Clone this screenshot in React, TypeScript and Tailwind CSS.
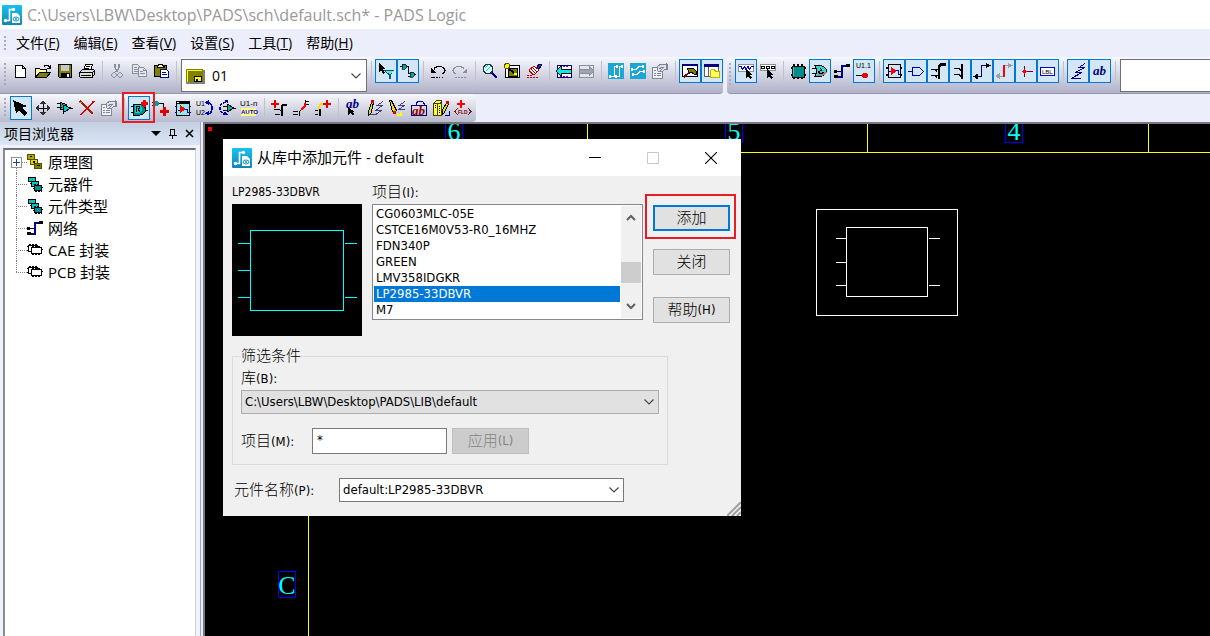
import React, { useState } from 'react';

type IconProps = { name: string; className?: string };

// 16x16 pixel drawings, one entry for each tool
const icons: Record<string, React.ReactNode> = {
  new: <path d="M2.500 2.500h7l3 3v9h-10zM9.500 2.500v3h3" fill="#fff" stroke="#000" />,
  open: (
    <>
      <path d="M.500 14.500v-9h4l1 1h6v3" fill="#ffffb0" stroke="#000" />
      <path d="M.500 14.500l4-5h11l-4 5z" fill="#808000" stroke="#000" />
      <path d="M9 3.500l1-1h3l2 2M15.500 2v4M12 5.500h3" stroke="#000" fill="none" />
    </>
  ),
  save: (
    <>
      <path d="M1.500 1.500h13v13h-12l-1-1z" fill="#808000" stroke="#000" />
      <path d="M4 2h8v6H4z" fill="#c8c8c8" />
      <path d="M4 10h9v5H4z" fill="#000" />
      <path d="M10 11h2v3h-2z" fill="#fff" />
    </>
  ),
  print: (
    <>
      <path d="M4.500 7.500l2-6h7l-2 6z" fill="#fff" stroke="#000" />
      <path d="M7 3.500h4M6 5.500h4" stroke="#000" />
      <path d="M.500 9.500l3-3h11l1 1v4l-3 3h-11l-1-1z" fill="#ddd" stroke="#000" />
      <path d="M1 9.500h12v5M2 12.500h10M13 10l2-2" stroke="#000" fill="none" />
      <path d="M9 11h2v1H9z" fill="#e0e000" />
    </>
  ),
  cut: (
    <g stroke="#8a8f9c" fill="none">
      <path d="M6 1v4l3 4M10 1v4L7 9" strokeWidth="1.400" />
      <circle cx="5" cy="12" r="2.200" />
      <circle cx="11" cy="12" r="2.200" />
    </g>
  ),
  copy: (
    <g stroke="#8a8f9c" fill="#e4e6ee">
      <path d="M1.500 1.500h5l2 2v7h-7zM3 4.500h3M3 6.500h4M3 8.500h4" />
      <path d="M7.500 4.500h5l3 3v6h-8zM9 8.500h3M9 10.500h5M12 5.500v2h3" />
    </g>
  ),
  paste: (
    <>
      <path d="M1.500 2.500h12v11h-12z" fill="#808000" stroke="#000" />
      <path d="M4 3.500l2-2h3l2 2v1H4z" fill="#ffff60" stroke="#000" />
      <path d="M7.500 6.500h6l2 2v6h-8z" fill="#fff" stroke="#000080" />
      <path d="M9 9.500h4M9 11.500h5" stroke="#000080" />
    </>
  ),
  board: (
    <>
      <path d="M0 1h17v13H0z" fill="#808000" />
      <path d="M1.500 14V2.500H16" stroke="#ffff00" fill="none" />
      <path d="M0 14.500h18V2" stroke="#808080" strokeWidth="2" fill="none" />
      <path d="M8 8h7v5H8z" fill="#ff0" stroke="#000" />
      <path d="M10 11h2v2h-2z" fill="#000" />
    </>
  ),
  filter: (
    <>
      <path d="M1 0v9l2-2 2 4 2-1-2-4h3z" fill="#000" />
      <path d="M6.500 7.500h9l-3.500 4v4h-1v-4z" fill="#fff" stroke="#006060" />
      <path d="M7 8h8l-3 3" fill="#7dd" />
    </>
  ),
  link: (
    <>
      <path d="M2 1h3l2 2-2 3H2z" fill="#00a0a0" stroke="#000" strokeWidth=".7" />
      <path d="M0 3.500h2M7 3.500h1.500v7H10" stroke="#000" fill="none" />
      <path d="M10 9h3l2 2-2 3h-3z" fill="#00a0a0" stroke="#000" strokeWidth=".7" />
      <path d="M8 13.500h2M15 11.500h1" stroke="#000" />
    </>
  ),
  undo: (
    <>
      <path d="M4 6c2-4 10-3 11 1 0 2-1 3-3 4" stroke="#000" strokeWidth="1.200" fill="none" />
      <path d="M1 5v5h5z" fill="#000" />
      <path d="M2 9l3-3M1 14.500h9M12 14.500h1" stroke="#000" strokeDasharray="4 1 2 1" />
    </>
  ),
  redo: (
    <g stroke="#8a8f9c">
      <path d="M12 6C10 2 2 3 1 7c0 2 1 3 3 4" strokeWidth="1.200" fill="none" />
      <path d="M15 5v5h-5z" fill="#8a8f9c" stroke="none" />
      <path d="M3 14.500h2M6 14.500h9" strokeDasharray="2 1" />
    </g>
  ),
  zoom: (
    <>
      <path d="M10 10l5 5" stroke="#000080" strokeWidth="2.500" />
      <circle cx="6" cy="6" r="4.800" fill="#d8ffff" stroke="#303030" />
      <path d="M3 5l3-3M4 8l5-5" stroke="#00e0e0" />
    </>
  ),
  zoomBoard: (
    <>
      <path d="M1.500 2.500h14v12h-14z" fill="#fff" stroke="#000" strokeWidth="1.500" />
      <path d="M4 5h9v8H4z" fill="#808000" stroke="#000" />
      <path d="M4 5l6 5" stroke="#000" strokeWidth="2" />
      <circle cx="3" cy="3" r="2.500" fill="#ff0" stroke="#505000" />
      <path d="M10 10h3v2h-3z" fill="#ff0" />
    </>
  ),
  brush: (
    <>
      <path d="M11 4l2-3h2v2l-2 3z" fill="#3030c0" stroke="#000050" />
      <path d="M8 3l5 4-5 5-5-5z" fill="#fff" stroke="#b00000" />
      <path d="M7 5l4 4M5 6l4 4M3 8l4 4" stroke="#c00000" />
      <path d="M1 12.500h5M1 14.500h12" stroke="#d00000" strokeDasharray="2 1" />
    </>
  ),
  prev: (
    <>
      <path d="M1.500 2.500h14v12h-14z" fill="#fff" stroke="#000080" />
      <path d="M4 3.500h9M4 13.500h9" stroke="#80a" strokeDasharray="2 1" />
      <path d="M0 8l5-5v3h10v4H5v3z" fill="#00f0f0" stroke="#000" />
    </>
  ),
  next: (
    <g stroke="#8a8f9c">
      <path d="M1.500 2.500h14v12h-14z" fill="#e4e6ee" />
      <path d="M16 8l-5-5v3H1v4h10v3z" fill="#a0a4b0" />
    </g>
  ),
  layout: (
    <>
      <path d="M0 0h16v16H0z" fill="#1ca6d4" />
      <path d="M2 13.500h4.500v-10H9M8 13.500h3.500v-10H15" stroke="#fff" fill="none" />
      <path d="M1 12h2v3H1zM8 2h2v3H8zM7 12h2v3H7zM13 2h2v3h-2z" fill="#fff" />
    </>
  ),
  router: (
    <>
      <path d="M0 0h16v16H0z" fill="#1ca6d4" />
      <path d="M2 6.500h4l3-3h4M3 11.500h4l3-3h4" stroke="#fff" fill="none" />
      <path d="M1 5h2v3H1zM12 2h2v3h-2zM2 10h2v3H2zM13 7h2v3h-2z" fill="#fff" />
    </>
  ),
  properties: (
    <g stroke="#808593" fill="none">
      <path d="M.500 4.500h10v11H.500z" fill="#f0f1f6" />
      <path d="M2 7.500h2M2 10.500h2M5 10.500h4M2 12.500h2M5 12.500h4" />
      <path d="M5 4l4-3h6v5h-2l-3 3-4-1z" fill="#e0e2ea" />
      <path d="M7 6l3-2h2M8 8l3-3M14 0v7" />
    </g>
  ),
  hammer: (
    <>
      <path d="M.500 1.500h15v12H.500z" fill="#fff" stroke="#000" />
      <path d="M0 1h16v2H0z" fill="#000080" />
      <path d="M9 8l-7 6" stroke="#800000" strokeWidth="2" />
      <path d="M5 5h6l3 3v3h-2L9 9H7z" fill="#808000" stroke="#000" />
    </>
  ),
  explorer: (
    <>
      <path d="M.500 1.500h14v12H.500z" fill="#fff" stroke="#606060" />
      <path d="M0 1h15v3H0z" fill="#000080" />
      <path d="M4.500 4v10" stroke="#606060" />
      <path d="M6.500 14.500v-7l1-1h3l1 2h4v6z" fill="#ffff60" stroke="#c0b000" />
    </>
  ),
  waveSelect: (
    <>
      <path d="M.500 1.500h15v7H.500z" fill="#fff" stroke="#909090" />
      <path d="M1 3.500h2l1.500 3 2-3 1.500 3 2-3 1.500 3 2-3h2" stroke="#0000e0" fill="none" />
      <path d="M8 6v9l2-2 2 3 2-1-2-3h3z" fill="#000" />
    </>
  ),
  boxSelect: (
    <>
      <path d="M.500 1.500h15v6H.500z" fill="#fff" stroke="#909090" />
      <path d="M1.500 3.500h3v2h-3zM6.500 3.500h3v2h-3zM11.500 3.500h3v2h-3z" fill="none" stroke="#000" />
      <path d="M7 6v9l2-2 2 3 2-1-2-3h3z" fill="#000" />
    </>
  ),
  chip: (
    <>
      <path d="M2 3h12v11H2z" fill="#008a8a" stroke="#000" />
      <path d="M3.500 1v2M7.500 1v2M11.500 1v2M3.500 14v2M7.500 14v2M11.500 14v2M1 5h1M1 12h1M14 5h2M14 12h2" stroke="#000" strokeWidth="2" />
      <path d="M3 4h1v9H3z" fill="#00e0e0" />
    </>
  ),
  gate: (
    <>
      <path d="M3 2.500h6q5 2 6 5.500-2 4-6 5.500H3q3-5 0-11z" fill="#40d0d0" stroke="#000" />
      <path d="M4 13q3-2 2-4h9q-3 4-6 4z" fill="#909090" />
      <path d="M0 5.500h4M0 10.500h4M8 5q3 2 0 3t1 3l3-2" stroke="#000" fill="none" />
    </>
  ),
  net: (
    <>
      <path d="M2 13.500h5.500v-11H14" stroke="#000090" strokeWidth="2" fill="none" />
      <path d="M0 7h3v3H0zM0 12h4v3H0zM12 1h4v3h-4z" fill="#000" />
      <path d="M3 8.500h4" stroke="#000" />
    </>
  ),
  pinNumber: (
    <>
      <text x="0" y="5" fontSize="7" fontFamily="Liberation Sans, sans-serif" fill="#000">U1.1</text>
      <path d="M0 12.500h8" stroke="#000" />
      <circle cx="9" cy="12.500" r="2.700" fill="#f00000" />
    </>
  ),
  partBox: (
    <>
      <path d="M2.500 1.500h12v13h-12z" fill="none" stroke="#000" strokeWidth="1.500" />
      <path d="M0 4.500h3M0 11.500h3M14 4.500h2M14 11.500h2" stroke="#000" strokeWidth="2" />
      <path d="M3 8.500h2M10 7.500h2v4h2" stroke="#0000ff" fill="none" />
      <path d="M5 4l6 4-6 4z" fill="#ff0000" />
    </>
  ),
  gateOutline: <path d="M0 8.500h4.500M4.500 4.500h7l4 4-4 4h-7z" fill="none" stroke="#0000a0" />,
  busA: (
    <>
      <path d="M16 1.500h-4q-3 0-3 3V16" stroke="#000" strokeWidth="2.500" fill="none" />
      <path d="M1 6.500h4l2 2M1 12.500h4l2 2M2 12.500h6M2 6.500h6" stroke="#000" fill="none" />
    </>
  ),
  busB: (
    <>
      <path d="M10 1v15" stroke="#000" strokeWidth="2" />
      <path d="M2 5.500h5l2 2M2 11.500h5l2 2" stroke="#000" fill="none" />
    </>
  ),
  route: (
    <>
      <path d="M2 13.500h5.500v-11H14" stroke="#000080" fill="none" strokeWidth="1.500" />
      <path d="M0 13.500l3-2v4zM16 2.500l-4-2v4z" fill="#000" stroke="#000" />
    </>
  ),
  routeRed: (
    <>
      <path d="M1 13.500h6M8 2.500h7" stroke="#a0a0a0" strokeWidth="1.500" />
      <path d="M0 13l3-2v4zM16 2.500l-4-2v4z" fill="#a0a0a0" stroke="#a0a0a0" />
      <path d="M8 2v12" stroke="#f00" strokeWidth="2" />
    </>
  ),
  junction: (
    <>
      <path d="M6.500 3v11M6 8.500h9" stroke="#700030" />
      <circle cx="6.500" cy="8.500" r="2.200" fill="#f00" />
    </>
  ),
  label: (
    <>
      <path d="M.500 4.500h14v8H.500z" fill="#fff" stroke="#0000e0" />
      <text x="2" y="11" fontSize="6" fontFamily="Liberation Sans, sans-serif" fill="#000">LBL</text>
    </>
  ),
  lines: (
    <path d="M15 .500L9 4.500h6L5 9.500h7L1 15.500h10" fill="none" stroke="#000080" />
  ),
  text: (
    <text x="1" y="12" fontSize="13" fontWeight="700" fontStyle="italic" fontFamily="Liberation Serif, serif" fill="#000080">ab</text>
  ),
  arrow: <path d="M0 0l3 13 3-3 5 6 3-3-5-5 5-2z" fill="#000" />,
  move: (
    <>
      <path d="M8 2v12M2 8h12" stroke="#000" />
      <path d="M8 0l3 4H5zM8 16l3-4H5zM0 8l4-3v6zM16 8l-4-3v6z" fill="#303030" />
    </>
  ),
  gateMove: (
    <>
      <path d="M3 2l7 3-3 5-4-1z" fill="#00b0b0" stroke="#000" />
      <path d="M6 5l8 3-7 4z" fill="#00c8c8" stroke="#000" />
      <path d="M0 3.500h3M0 7.500h5M3 9.500h4M13 8.500h3M6 11v3" stroke="#000" />
    </>
  ),
  delete: (
    <>
      <path d="M1 1l13 13" stroke="#a02000" strokeWidth="2.200" />
      <path d="M15 1L2 15" stroke="#e00000" strokeWidth="1.500" />
      <path d="M0 2h3" stroke="#e08000" />
    </>
  ),
  addPart: (
    <>
      <path d="M2 4h7q5 1 6 6-2 5-6 5H2z" fill="#008888" stroke="#000" />
      <path d="M4 5h5q2 1 2 5l-2 3H4z" fill="#00d8d8" />
      <path d="M5 12V6h3l1 2-2 1 2 3M0 6.500h3M0 12.500h3M15 10.500h2" stroke="#000" fill="none" />
      <path d="M13 0v7M10 3.500h7" stroke="#f00" strokeWidth="3" />
    </>
  ),
  addWire: (
    <>
      <path d="M1 1h3l3 2-3 3H1z" fill="#00a0a0" />
      <path d="M-1 2.500h2M-1 5.500h2M6 3.500h4v5" stroke="#000" fill="none" />
      <path d="M11 7v9M7 11.500h9" stroke="#e00000" strokeWidth="3" />
    </>
  ),
  sheet: (
    <>
      <path d="M1.500 1.500h13v14h-13z" fill="#90e8e8" stroke="#000" strokeWidth="1.500" />
      <path d="M1 1h14v3H1z" fill="#000" />
      <path d="M2 2h2v1H2z" fill="#fff" />
      <path d="M0 6.500h2M0 12.500h2M14 6.500h2M14 12.500h2M3 10.500h2M10 9.500h2v3h2" stroke="#0000c0" fill="none" />
      <path d="M5 5l6 4-6 4z" fill="#f00" />
    </>
  ),
  rename: (
    <>
      <text x="-1" y="6" fontSize="7" fontFamily="Liberation Sans, sans-serif" fill="#000">U1</text>
      <text x="-1" y="15" fontSize="7" fontFamily="Liberation Sans, sans-serif" fill="#000">U2</text>
      <path d="M10 2.500q5 0 5 5.500t-4 6" stroke="#0000c0" strokeWidth="1.500" fill="none" />
      <path d="M8 2.500l4-3v6zM8 13.500l4-3v5z" fill="#0000c0" />
    </>
  ),
  swap: (
    <>
      <path d="M7 2q-6 1-6 6t5 6" stroke="#0000a0" strokeWidth="1.500" fill="none" strokeDasharray="3 1" />
      <path d="M5 0h4v4zM4 15h5l-3-4z" fill="#0000a0" />
      <path d="M8 4l7 4-7 4z" fill="#00b0b0" stroke="#000" />
      <path d="M4 6.500h4M4 10.500h4M14 8.500h3" stroke="#000" />
    </>
  ),
  autoName: (
    <>
      <text x="-1" y="6" fontSize="8" fontFamily="Liberation Sans, sans-serif" fill="#000">U1-n</text>
      <path d="M0 8h15v8H0z" fill="#ffff80" />
      <text x="0" y="14" fontSize="6" fontWeight="700" fontFamily="Liberation Sans, sans-serif" fill="#0000e0">AUTO</text>
    </>
  ),
  addBus: (
    <>
      <path d="M4 0v8M0 4h8" stroke="#e00000" strokeWidth="2.500" />
      <path d="M16 5h-3q-2 0-2 2v9" stroke="#000" strokeWidth="2" fill="none" />
      <path d="M3 9.500h5l2 1M4 14.500h5" stroke="#000" fill="none" />
    </>
  ),
  splitBus: (
    <>
      <path d="M12.500 0v5M16 1.500h-3M16 4.500h-5" stroke="#000" />
      <path d="M12 3v3l-4 4" stroke="#f00" strokeWidth="2" fill="none" />
      <path d="M8 10q-2 1-2 6M0 11.500h5M0 14.500h5" stroke="#000" fill="none" />
    </>
  ),
  extendBus: (
    <>
      <path d="M10 3.500H7q-3 1-3 6" stroke="#ffe000" strokeWidth="2" fill="none" />
      <path d="M12 0v8M8 4h8" stroke="#e00000" strokeWidth="2.500" />
      <path d="M5 9v7M0 10.500h3M0 14.500h3" stroke="#000" strokeWidth="1.500" />
    </>
  ),
  textPick: (
    <>
      <text x="1" y="8" fontSize="13" fontWeight="700" fontStyle="italic" fontFamily="Liberation Serif, serif" fill="#000090">ab</text>
      <path d="M3 7v8l2-2 3 3 1-2-2-2h3z" fill="#000" />
    </>
  ),
  pencil: (
    <>
      <path d="M16 1.500l-6 4h5l-6 5h5l-5 4H3" stroke="#404080" fill="none" />
      <path d="M4.500 2.500h2L4 13l-2.500 2v-3z" fill="#e8e000" stroke="#000" />
      <path d="M4 0h3v3H4z" fill="#e00000" />
    </>
  ),
  pencilEdit: (
    <>
      <path d="M16 1.500l-6 4h5l-5 4h6" stroke="#404080" fill="none" />
      <path d="M.500.500h2l5 10-2 3-2-2z" fill="#e8e000" stroke="#000" />
      <path d="M4 11h3v3H4z" fill="#e00000" />
      <path d="M8 15h4v-3" stroke="#ff0" strokeWidth="2" fill="none" />
    </>
  ),
  textFrame: (
    <>
      <path d="M.500 5.500h15v10H.500z" fill="none" stroke="#000080" />
      <path d="M5 6q0-5 4-5t5 5" stroke="#0000a0" fill="none" />
      <text x="1" y="15" fontSize="13" fontWeight="700" fontStyle="italic" fontFamily="Liberation Serif, serif" fill="#900000">ab</text>
    </>
  ),
  library: (
    <>
      <path d="M.500 3.500l3-3h5v15h-8z" fill="#ffff40" stroke="#404000" />
      <path d="M4.500 3v13M1 3.500h6l2-2" stroke="#404000" fill="none" />
      <path d="M2.500 5v4M6.500 6v8" stroke="#000" strokeDasharray="1 1" />
      <path d="M14 2l2 1-5 10-2 2v-4z" fill="#e8e000" stroke="#000" />
      <path d="M13 1h3v3h-3z" fill="#e00000" />
      <path d="M12 15h4v-4" stroke="#000080" fill="none" />
    </>
  ),
  field: (
    <>
      <path d="M6 0v8M2 4h8" stroke="#f00" strokeWidth="2" />
      <path d="M3 8l-3 3.500L3 15M13 8l3 3.500-3 3.500" stroke="#602020" fill="none" />
      <text x="3" y="14" fontSize="5" fontWeight="700" fontFamily="Liberation Sans, sans-serif" fill="#900000">FLD</text>
    </>
  ),
  schematic: (
    <>
      <path d="M.500.500h7v5h-7z" fill="#b0a800" stroke="#505000" />
      <path d="M3.500 5.500h7v5h-7z" fill="#e8d800" stroke="#505000" />
      <path d="M7.500 9.500h7v5h-7z" fill="#808000" stroke="#505000" />
      <path d="M3 2h2v1H3zM6 7h2v2H6zM10 11h3v1h-3z" fill="#000" />
    </>
  ),
  parts: (
    <>
      <path d="M1.500 1.500h7v4h-7zM4.500 5.500h7v5h-7z" fill="#00c8c8" stroke="#000" />
      <path d="M7.500 9.500h7v5h-7z" fill="#009090" stroke="#000" />
      <path d="M3 7.500h2M6 12.500h2M14 11.500h2M8 15.500h7M7 8.500h6" stroke="#000" strokeDasharray="2 1" />
    </>
  ),
  outline: (
    <>
      <path d="M1.500 3.500h9v6h-9z" fill="#fff" stroke="#000" />
      <path d="M4.500 5.500h10v6h-10z" fill="#fff" stroke="#000" />
      <path d="M2 2.500h8M0 4.500h1M0 8.500h1M5 12.500h9M15 7.500h1M5 4.500h9" stroke="#000" strokeDasharray="2 1" />
    </>
  ),
};

const Icon = ({ name, className = '' }: IconProps) => (
  <svg width="16" height="16" viewBox="0 0 16 16" shapeRendering="crispEdges" className={`shrink-0 overflow-visible ${className}`}>
    {icons[name]}
  </svg>
);

const Logo = () => (
  <svg width="20" height="20" viewBox="0 0 20 20" className="shrink-0">
    <defs>
      <linearGradient id="logoFill" x1="0" y1="0" x2="0" y2="1">
        <stop offset="0" stopColor="#19c1f3" />
        <stop offset="1" stopColor="#0e86b4" />
      </linearGradient>
    </defs>
    <rect width="20" height="20" rx="1" fill="url(#logoFill)" />
    <path d="M4 15.500h3.500V4.500H11" stroke="#fff" strokeWidth="1.600" fill="none" />
    <circle cx="3.500" cy="15.500" r="1.700" fill="#fff" />
    <circle cx="11.500" cy="4.500" r="1.700" fill="#fff" />
    <path d="M10 8h5l3 3v7h-8z" fill="#fff" />
    <ellipse cx="14" cy="14" rx="3" ry="2" fill="none" stroke="#1595c4" />
    <circle cx="14" cy="14" r="1" fill="#1595c4" />
  </svg>
);

const Chevron = ({ className = '' }: { className?: string }) => (
  <svg width="10" height="6" viewBox="0 0 10 6" className={`pointer-events-none ${className}`}>
    <path d="M.5.5L5 5 9.500.5" fill="none" stroke="#444" strokeWidth="1.100" />
  </svg>
);

const Grip = ({ className = '' }: { className?: string }) => (
  <span className={`w-0.5 shrink-0 bg-[repeating-linear-gradient(to_bottom,#a9abba_0_2px,transparent_2px_4px)] ${className}`} />
);

const Separator = () => (
  <span className="flex h-6 w-2 shrink-0 justify-center py-0.5">
    <span className="w-px bg-[#bfc1cb]" />
  </span>
);

interface ToolProps {
  name: string;
  active?: boolean;
  marked?: boolean;
}

const Tool = ({ name, active = false, marked = false }: ToolProps) => (
  <button
    type="button"
    aria-label={name}
    className={`relative flex h-6 w-[22px] shrink-0 items-center justify-center border ${
      active ? 'border-[#0078d7] bg-[#d3e6f5]' : 'border-transparent hover:bg-white/60'
    }`}
  >
    <Icon name={name} />
    {marked && <span className="pointer-events-none absolute -top-[5px] -right-1.5 -bottom-1 -left-[7px] z-20 border-2 border-[#e81c24]" />}
  </button>
);

// "|" is a separator, a leading "*" marks a pressed tool
const renderTools = (list: string) =>
  list.split(' ').map((item, index) => {
    if (item === '|') return <Separator key={index} />;
    const name = item.replace('*', '');
    return <Tool key={index} name={name} active={item.startsWith('*')} marked={name === 'addPart'} />;
  });

const menus = [
  ['文件', 'F'],
  ['编辑', 'E'],
  ['查看', 'V'],
  ['设置', 'S'],
  ['工具', 'T'],
  ['帮助', 'H'],
];

const Toolbars = () => (
  <div className="shrink-0 bg-[#eceefb]">
    <nav className="flex h-7 items-center pl-1 text-sm">
      <Grip className="mr-[3px] h-3.5" />
      {menus.map(([label, key]) => (
        <button key={key} type="button" className="px-[7px] whitespace-nowrap hover:bg-white">
          {label}(<u>{key}</u>)
        </button>
      ))}
    </nav>
    <div className="flex h-[37px] gap-1">
      <div className="flex shrink-0 rounded-r border-b border-[#9696ad] bg-linear-to-b from-[#f7f8fd] to-[#b1b2c9] pt-0.5 pl-1">
        <Grip className="mt-1 mr-1 h-6" />
        {renderTools('new open save print | cut copy paste |')}
        <div className="relative ml-px flex h-[33px] w-[186px] items-center border border-[#707070] bg-white pl-1">
          <Icon name="board" />
          <select aria-label="sheet" className="h-full flex-1 appearance-none bg-transparent pl-2.5 text-sm outline-none">
            <option>01</option>
          </select>
          <Chevron className="absolute right-[5px]" />
        </div>
        {renderTools('| *filter *link | undo redo | zoom zoomBoard brush | prev next | layout router properties | *hammer *explorer')}
      </div>
      <div className="flex min-w-0 flex-1 rounded-l border-b border-[#9696ad] bg-linear-to-b from-[#f7f8fd] to-[#b1b2c9] pt-0.5 pl-0.5">
        <Grip className="mt-1 mr-1 h-6" />
        {renderTools('*waveSelect boxSelect | chip *gate net *pinNumber | *partBox *gateOutline *busA *busB *route *routeRed *junction *label | *lines *text |')}
        <input aria-label="command" className="ml-px h-[33px] min-w-0 flex-1 border border-r-0 border-[#707070] bg-white px-1 text-sm outline-none" />
      </div>
    </div>
    <div className="flex h-7">
      <div className="flex items-center rounded-r bg-linear-to-b from-[#f7f8fd] to-[#b9bacd] pr-0.5 pl-1">
        <Grip className="mr-1 h-5" />
        {renderTools('*arrow move gateMove delete properties | *addPart addWire sheet rename swap autoName | addBus splitBus extendBus | textPick pencil pencilEdit textFrame library field')}
      </div>
    </div>
  </div>
);

const tree = [
  { label: '原理图', icon: 'schematic', expandable: true },
  { label: '元器件', icon: 'parts' },
  { label: '元件类型', icon: 'parts' },
  { label: '网络', icon: 'net' },
  { label: 'CAE 封装', icon: 'outline' },
  { label: 'PCB 封装', icon: 'outline' },
];

const ProjectBrowser = () => (
  <aside className="flex w-[201px] shrink-0 flex-col border-r border-[#a5a7b5] bg-[#f0f2fa]">
    <header className="flex h-[23px] items-center bg-linear-to-b from-[#c3cfe2] to-[#dce6f4] pr-0.5 pl-1 text-sm">
      <h2 className="flex-1">项目浏览器</h2>
      <button type="button" aria-label="menu" className="px-1">
        <svg width="10" height="5" viewBox="0 0 10 5"><path d="M0 0h10L5 5z" /></svg>
      </button>
      <button type="button" aria-label="pin" className="px-1">
        <svg width="8" height="10" viewBox="0 0 8 10" shapeRendering="crispEdges">
          <path d="M1.500 6V.5h4V6M5 0v6M0 6.500h8M3.500 7v3" fill="none" stroke="#000" />
        </svg>
      </button>
      <button type="button" aria-label="close" className="px-1">
        <svg width="9" height="9" viewBox="0 0 9 9"><path d="M1 1l7 7M8 1L1 8" stroke="#000" strokeWidth="1.500" /></svg>
      </button>
    </header>
    <div className="mt-[3px] mr-1 ml-[3px] flex-1 border-t-2 border-r border-l-2 border-t-[#70727a] border-r-[#d0d0d0] border-l-[#8a8c94] bg-white pt-px pl-1.5">
      <ul className="text-[15px]">
        {tree.map((node, index) => (
          <li key={node.label} className="flex h-[22px] items-center">
            <span className="relative h-full w-4 shrink-0">
              <span
                className={`absolute left-[5px] border-l border-dotted border-[#808080] ${
                  index === 0 ? 'top-1/2 h-1/2' : index === tree.length - 1 ? 'top-0 h-1/2' : 'top-0 h-full'
                }`}
              />
              <span className="absolute top-1/2 right-0 left-[5px] border-t border-dotted border-[#808080]" />
              {node.expandable && (
                <button
                  type="button"
                  aria-label="expand"
                  className="absolute top-1.5 left-0 flex size-[11px] items-center justify-center border border-[#909090] bg-white"
                >
                  <svg width="7" height="7" viewBox="0 0 7 7"><path d="M0 3.500h7M3.500 0v7" stroke="#2040a0" /></svg>
                </button>
              )}
            </span>
            <Icon name={node.icon} />
            <span className="pl-[5px]">{node.label}</span>
          </li>
        ))}
      </ul>
    </div>
  </aside>
);

const frameNumbers = [
  { label: '6', x: 249 },
  { label: '5', x: 529 },
  { label: '4', x: 809 },
];

const Drawing = () => (
  <svg className="absolute inset-0 h-full w-full" shapeRendering="crispEdges" fill="none">
    <circle cx="5" cy="5" r="2.500" fill="#f00" />
    <path d="M103.500 2000V28.500H3000M382.500 0v28M662.500 0v28M943.500 0v28" stroke="#ffff00" />
    <g fontFamily="Liberation Serif, serif" fontSize="26" textAnchor="middle">
      {frameNumbers.map(({ label, x }) => (
        <g key={label}>
          <path d={`M${x - 8.5} 0V18.500h17V0`} stroke="#0000ff" />
          <text x={x} y="16" fill="#00ffff">{label}</text>
        </g>
      ))}
      <rect x="73.500" y="447.500" width="17" height="26" stroke="#0000ff" />
      <text x="82" y="470" fill="#00ffff">C</text>
    </g>
    <g stroke="#fff">
      <rect x="611.500" y="85.500" width="141" height="106" />
      <rect x="641.500" y="103.500" width="81" height="69" />
      <path d="M631 114.500h10M631 138.500h10M631 161.500h10M724 114.500h11M724 161.500h11" />
    </g>
  </svg>
);

const items = [
  'CG0603MLC-05E',
  'CSTCE16M0V53-R0_16MHZ',
  'FDN340P',
  'GREEN',
  'LMV358IDGKR',
  'LP2985-33DBVR',
  'M7',
];

const dialogFont = "font-['DejaVu_Sans_Condensed','Noto_Sans_CJK_SC',sans-serif]";

interface CaptionProps {
  text: string;
  hotkey: string;
}

const Caption = ({ text, hotkey }: CaptionProps) => (
  <>
    <span className="text-[15px] font-light">{text}</span>({hotkey})
  </>
);

const buttonClass = 'flex h-[26px] w-[77px] shrink-0 items-center justify-center border leading-5';

const AddPartDialog = () => {
  const [selected, setSelected] = useState('LP2985-33DBVR');
  const [filter, setFilter] = useState('*');

  return (
    <section role="dialog" aria-label="从库中添加元件 - default" className="absolute top-[15px] left-[18px] w-[518px] bg-[#f0f0f0] text-black">
      <header className="flex h-[37px] items-center bg-white pr-px pl-[9px]">
        <Logo />
        <h1 className="flex-1 pl-[5px] text-[15px]">从库中添加元件 - default</h1>
        <button type="button" aria-label="minimize" className="flex h-full w-[58px] items-center justify-center">
          <svg width="12" height="12" viewBox="0 0 12 12"><path d="M0 5.500h12" stroke="#000" /></svg>
        </button>
        <button type="button" aria-label="maximize" disabled className="flex h-full w-[58px] items-center justify-center">
          <svg width="12" height="12" viewBox="0 0 12 12"><path d="M.5.5h11v11H.5z" fill="none" stroke="#c8c8c8" /></svg>
        </button>
        <button type="button" aria-label="close" className="flex h-full w-[58px] items-center justify-center">
          <svg width="12" height="12" viewBox="0 0 12 12"><path d="M0 0l12 12M12 0L0 12" stroke="#000" strokeWidth="1.100" /></svg>
        </button>
      </header>

      <div className={`px-[9px] pt-1.5 pb-3.5 text-[13px] ${dialogFont}`}>
        <div className="flex gap-2.5">
          <div className="w-[130px]">
            <p className="h-[22px] text-xs leading-5">{selected}</p>
            <svg width="130" height="132" className="block bg-black" shapeRendering="crispEdges" fill="none" stroke="#00ffff">
              <rect x="18.500" y="26.500" width="93" height="80" />
              <path d="M6 39.500h12M6 66.500h12M6 93.500h12M113 39.500h12M113 93.500h12" />
            </svg>
          </div>

          <div className="w-[271px]">
            <p id="items-label" className="h-[22px] leading-5">
              <Caption text="项目" hotkey="I" />:
            </p>
            <div className="flex border border-[#828790] bg-white p-px">
              <ul role="listbox" aria-labelledby="items-label" className="flex-1">
                {items.map((item) => (
                  <li
                    key={item}
                    role="option"
                    aria-selected={item === selected}
                    onClick={() => setSelected(item)}
                    className={`h-4 pl-0.5 leading-4 ${item === selected ? 'bg-[#0078d7] text-white' : ''}`}
                  >
                    {item}
                  </li>
                ))}
              </ul>
              <div className="ml-px flex w-5 flex-col items-center bg-[#f0f0f0] py-2">
                <svg width="10" height="7" viewBox="0 0 10 7"><path d="M1 6l4-4 4 4" fill="none" stroke="#606060" strokeWidth="2" /></svg>
                <span className="mt-[41px] h-[21px] w-full bg-[#cdcdcd]" />
                <svg width="10" height="7" viewBox="0 0 10 7" className="mt-auto"><path d="M1 1l4 4 4-4" fill="none" stroke="#606060" strokeWidth="2" /></svg>
              </div>
            </div>
          </div>

          <div className="flex flex-col pt-[23px]">
            <div className="relative">
              <button type="button" className={`${buttonClass} border-2 border-[#0078d7] bg-[#e1e1e1]`}>
                <span className="text-[15px] font-light">添加</span>
              </button>
              <span className="pointer-events-none absolute -top-[11px] -right-1.5 -bottom-2 -left-2 border-2 border-[#e81c24]" />
            </div>
            <button type="button" className={`${buttonClass} mt-[18px] border-[#adadad] bg-[#e1e1e1]`}>
              <span className="text-[15px] font-light">关闭</span>
            </button>
            <button type="button" className={`${buttonClass} mt-[22px] border-[#adadad] bg-[#e1e1e1]`}>
              <Caption text="帮助" hotkey="H" />
            </button>
          </div>
        </div>

        <fieldset className="mt-2.5 w-[436px] border border-[#dcdcdc] px-2 pb-2.5">
          <legend className="text-[15px] leading-5 font-light">筛选条件</legend>
          <label htmlFor="library" className="block h-6 leading-6">
            <Caption text="库" hotkey="B" />:
          </label>
          <div className="relative flex items-center">
            <select id="library" className="h-6 w-full appearance-none border border-[#adadad] bg-[#e1e1e1] px-[3px] outline-none">
              <option>C:\Users\LBW\Desktop\PADS\LIB\default</option>
            </select>
            <Chevron className="absolute right-[5px]" />
          </div>
          <div className="mt-3.5 flex items-center">
            <label htmlFor="filter" className="w-[71px] leading-5">
              <Caption text="项目" hotkey="M" />:
            </label>
            <input
              id="filter"
              value={filter}
              onChange={(e) => setFilter(e.target.value)}
              className="h-[26px] w-[135px] border border-[#7a7a7a] bg-white px-1 pb-1 outline-none"
            />
            <button type="button" disabled className={`${buttonClass} ml-[5px] border-[#bfbfbf] bg-[#cccccc] text-[#838383]`}>
              <Caption text="应用" hotkey="L" />
            </button>
          </div>
        </fieldset>

        <div className="mt-[13px] flex items-center pl-0.5">
          <label htmlFor="part-name" className="w-[105px] leading-5">
            <Caption text="元件名称" hotkey="P" />:
          </label>
          <div className="relative flex w-[285px] items-center">
            <select id="part-name" className="h-6 w-full appearance-none border border-[#7a7a7a] bg-white px-[3px] outline-none">
              <option>default:LP2985-33DBVR</option>
            </select>
            <Chevron className="absolute right-[5px]" />
          </div>
        </div>
      </div>
      <svg width="14" height="14" viewBox="0 0 14 14" className="absolute right-0 bottom-0">
        <path d="M0 14L14 0M5 14l9-9M10 14l4-4" stroke="#a0a0a0" strokeWidth="2" />
      </svg>
    </section>
  );
};

export default function App() {
  return (
    <div className="flex min-h-screen flex-col overflow-hidden bg-[#eceefb] font-['Open_Sans','Noto_Sans_CJK_SC',sans-serif] text-black">
      <header className="flex h-[29px] shrink-0 items-center gap-[5px] bg-white pl-0.5 text-base text-[#999]">
        <Logo />
        <h1 className="truncate">C:\Users\LBW\Desktop\PADS\sch\default.sch* - PADS Logic</h1>
      </header>
      <Toolbars />
      <div className="flex flex-1">
        <ProjectBrowser />
        <main className="relative ml-0.5 flex-1 border-t-2 border-l-2 border-[#77787f] bg-black">
          <Drawing />
          <AddPartDialog />
        </main>
      </div>
    </div>
  );
}
